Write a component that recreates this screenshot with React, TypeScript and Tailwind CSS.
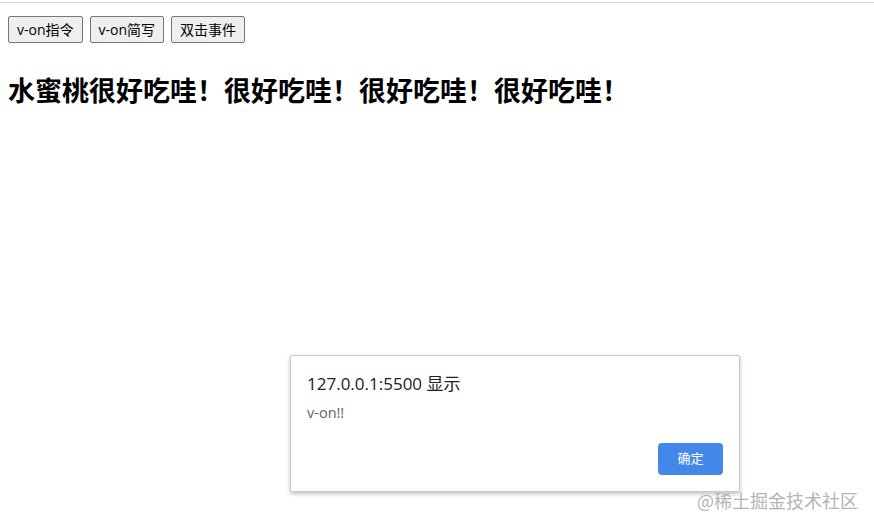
export default function App() {
  return (
    <div className="relative h-[529px] w-[874px] overflow-hidden bg-white font-['Open_Sans','Noto_Sans_CJK_SC',sans-serif] text-black">
      <div className="mt-[2px] h-px w-full bg-[#d9d9d9]" />
      <div className="flex gap-[7px] px-[8px] pt-[13px]">
        <button className="h-[27px] rounded-[2px] border border-[#767676] bg-[#efefef] px-[8px] text-[14px] leading-none">v-on指令</button>
        <button className="h-[27px] rounded-[2px] border border-[#767676] bg-[#efefef] px-[8px] text-[14px] leading-none">v-on简写</button>
        <button className="h-[27px] rounded-[2px] border border-[#767676] bg-[#efefef] px-[8px] text-[14px] leading-none">双击事件</button>
      </div>
      <h1 className="mt-[33px] px-[8px] font-['Noto_Sans_CJK_SC',sans-serif] text-[27px] font-bold leading-none">水蜜桃很好吃哇！很好吃哇！很好吃哇！很好吃哇！</h1>

      <div className="absolute left-[290px] top-[355px] h-[137px] w-[450px] rounded-[2px] border border-[#c8c8c8] bg-white shadow-[0_2px_4px_rgba(0,0,0,0.25)]">
        <div className="flex h-full flex-col px-[16px] pt-[17px]">
          <div className="text-[17px] leading-[22px] text-[#202124]">127.0.0.1:5500 显示</div>
          <div className="mt-[9px] text-[14.5px] leading-[18px] text-[#5f6368]">v-on!!</div>
          <div className="mt-[21px] flex justify-end">
            <button className="h-[32px] w-[65px] rounded-[4px] bg-[#4487eb] text-[13px] text-white">确定</button>
          </div>
        </div>
      </div>

      <div className="absolute left-[697px] top-[489px] font-['Noto_Sans_CJK_SC',sans-serif] text-[18px] leading-[22px] text-[#b4b4b4]">@稀土掘金技术社区</div>
    </div>
  );
}
